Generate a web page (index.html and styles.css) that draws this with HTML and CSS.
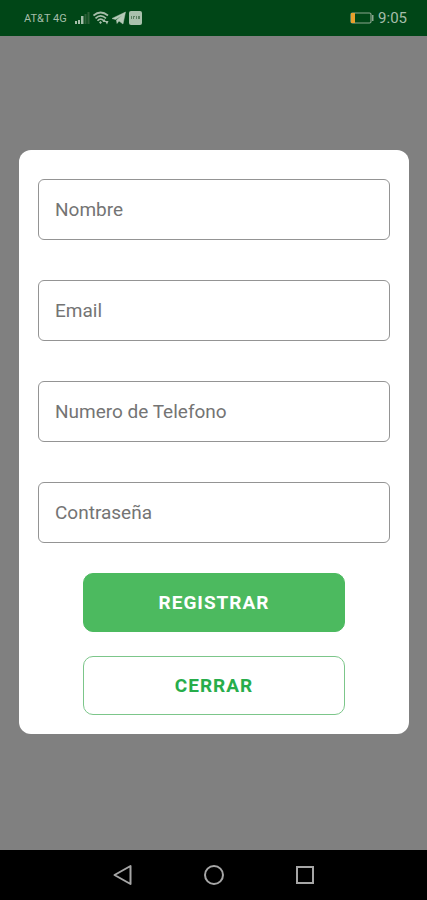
FILE: index.html
```html
<!DOCTYPE html>
<html lang="es">
<head>
<meta charset="utf-8">
<meta name="viewport" content="width=device-width, initial-scale=1">
<title>Registro</title>
<link rel="stylesheet" href="styles.css">
</head>
<body>
<header class="status">
  <div class="status-group">
    <span class="carrier">AT&amp;T 4G</span>
    <svg width="15" height="14" viewBox="0 0 15 14" aria-hidden="true">
      <path d="M0 13v-3h2v3zM3 13V9h2v4zM6 13V5h2.500v8z" fill="#a5bda9"/>
      <path d="M9.500 13V3h2v10zM12.500 13V1h2v12z" fill="#2e6039"/>
    </svg>
    <svg width="16" height="14" viewBox="0 0 16 14" aria-hidden="true">
      <g fill="none" stroke="#a5bda9" stroke-width="1.700">
        <path d="M.5 4.500Q7.500 -1.500 15 4.500M2.500 7.300Q7.500 2.500 13 7.300M4.500 9.800Q7.500 6.500 11 9.800"/>
      </g>
      <path d="M6 11.500L7.500 10 9 11.500 7.500 13zM9.500 11l2-3 1.500 3zM12 10h3.500l-1.500 3.500z" fill="#a5bda9"/>
    </svg>
    <svg width="14" height="14" viewBox="0 0 14 14" aria-hidden="true">
      <path d="M0 7.500L13.500 1 11 13 7 10 5 12.500 4.500 9 10 4.500 3.500 8.500z" fill="#b5cab8" stroke="#b5cab8" stroke-width=".5"/>
    </svg>
    <svg width="13" height="14" viewBox="0 0 13 14" aria-hidden="true">
      <rect width="13" height="14" rx="2" fill="#a9c1ad"/>
      <path d="M2 5h1v3H2zM4 5h2v1H5v2H4zM7 5h1v3H7zM9 5h2v3H9z" fill="#5b8062"/>
    </svg>
  </div>
  <div class="status-group">
    <svg width="24" height="12" viewBox="0 0 24 12" aria-hidden="true">
      <rect x="1" y="1" width="20" height="10" rx="1.500" fill="none" stroke="#8aa58e" stroke-width="1.200"/>
      <path d="M22 3h1.500v6H22z" fill="#8aa58e"/>
      <path d="M1 1h4v10H1z" fill="#e7a02c"/>
    </svg>
    <time class="clock">9:05</time>
  </div>
</header>
<main class="backdrop">
  <form class="card">
    <div class="fields">
      <input class="field" type="text" placeholder="Nombre" aria-label="Nombre">
      <input class="field" type="email" placeholder="Email" aria-label="Email">
      <input class="field" type="tel" placeholder="Numero de Telefono" aria-label="Numero de Telefono">
      <input class="field" type="password" placeholder="Contraseña" aria-label="Contraseña">
    </div>
    <div class="actions">
      <button class="button button-primary" type="submit">REGISTRAR</button>
      <button class="button" type="button">CERRAR</button>
    </div>
  </form>
</main>
<nav class="navbar">
  <button class="nav-button" type="button" aria-label="Atrás">
    <svg width="22" height="22" viewBox="0 0 22 22"><path d="M2.500 11L18.500 2v18z" fill="none" stroke="#a6a6a6" stroke-width="2" stroke-linejoin="round"/></svg>
  </button>
  <button class="nav-button" type="button" aria-label="Inicio">
    <svg width="22" height="22" viewBox="0 0 22 22"><circle cx="11" cy="11" r="9" fill="none" stroke="#a6a6a6" stroke-width="2"/></svg>
  </button>
  <button class="nav-button" type="button" aria-label="Recientes">
    <svg width="22" height="22" viewBox="0 0 22 22"><rect x="3" y="3" width="16" height="16" fill="none" stroke="#a6a6a6" stroke-width="2"/></svg>
  </button>
</nav>
</body>
</html>
```
FILE: styles.css
```css
* {
  box-sizing: border-box;
}

body {
  display: flex;
  flex-direction: column;
  min-height: 100vh;
  margin: 0;
  background: #808080;
  font-family: Roboto, "Liberation Sans", sans-serif;
}

.status {
  display: flex;
  align-items: center;
  justify-content: space-between;
  height: 36px;
  padding: 0 20px 0 24px;
  background: #004617;
  color: #a5bda9;
}

.status-group {
  display: flex;
  align-items: center;
  gap: 4px;
}

.status-group:first-child {
  gap: 3px;
}

.carrier {
  margin-right: 5px;
  font-size: 11px;
}

.clock {
  font-size: 15px;
}

.backdrop {
  display: flex;
  flex: 1;
  flex-direction: column;
  justify-content: center;
  padding: 0 18px 2px 19px;
}

.card {
  padding: 29px 19px 19px;
  border-radius: 12px;
  background: #fff;
}

.fields {
  display: grid;
  gap: 40px;
}

.field {
  width: 100%;
  height: 61px;
  padding: 0 16px;
  border: 1px solid #949494;
  border-radius: 6px;
  background: #fff;
  color: #222;
  font: 400 19px/24px Roboto, "Liberation Sans", sans-serif;
}

.field::placeholder {
  color: #747474;
  opacity: 1;
}

.actions {
  display: grid;
  gap: 24px;
  padding: 30px 45px 0;
}

.button {
  height: 59px;
  border: 1px solid #7cc68a;
  border-radius: 10px;
  background: #fff;
  color: #27ad4b;
  font: 700 19px/24px Roboto, "Liberation Sans", sans-serif;
  letter-spacing: 1px;
}

.button-primary {
  border-color: #4cba5f;
  background: #4cba5f;
  color: #fff;
}

.navbar {
  display: flex;
  align-items: center;
  justify-content: center;
  gap: 69px;
  height: 50px;
  background: #000;
}

.nav-button {
  display: flex;
  padding: 0;
  border: 0;
  background: none;
}
```
